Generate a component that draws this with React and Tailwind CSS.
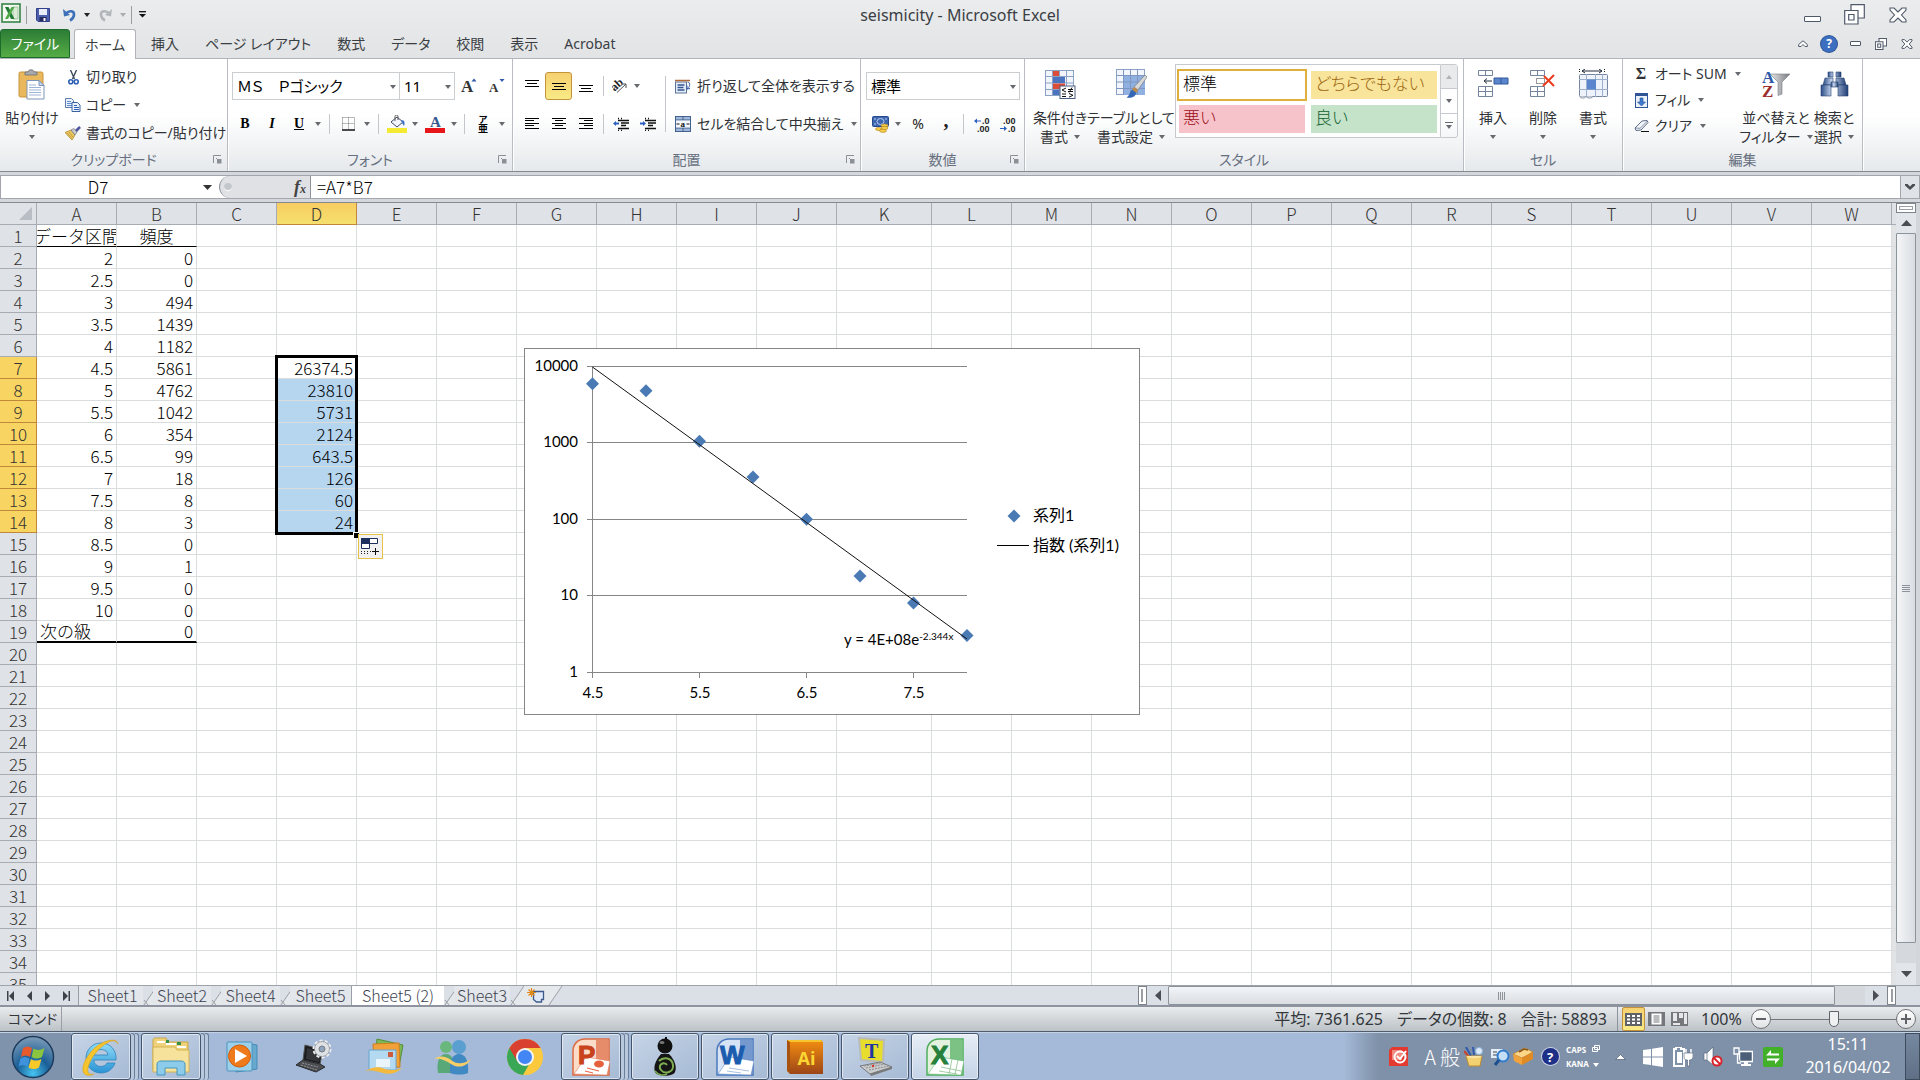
import React from "react";

const UI = "font-['Noto_Sans','Noto_Sans_CJK_JP',sans-serif]";
const SHEET = "font-['Noto_Sans_CJK_JP',sans-serif] font-light";

/* ---------- small shared pieces ---------- */

function Arrow({ className = "text-[#666a6e]" }) {
  return (
    <svg className={className} width="6" height="4" viewBox="0 0 6 4">
      <path d="M0 0h6L3 4z" fill="currentColor" />
    </svg>
  );
}

function Tool({ label, w, className = "", children }) {
  return (
    <button type="button" aria-label={label} className={`flex h-7 shrink-0 items-center justify-center ${w} ${className}`}>
      {children}
    </button>
  );
}

function Sep({ w, h = "h-5" }) {
  return (
    <span className={`flex shrink-0 items-center justify-center ${w}`}>
      <span className={`w-px bg-[#c3c7cb] ${h}`} />
    </span>
  );
}

function Group({ title, w, launcher, children }) {
  return (
    <section className={`flex shrink-0 flex-col border-r border-[#b9bdc3] shadow-[1px_0_0_#fff] ${w}`}>
      <div className="flex h-[90px]">{children}</div>
      <div className="relative flex h-[22px] items-center justify-center text-sm text-[#67707f]">
        {title}
        {launcher && (
          <button type="button" aria-label={`${title}の設定`} className="absolute right-[5px] top-[6px]">
            <svg width="9" height="9" viewBox="0 0 9 9">
              <path d="M.5 8V.5H8" fill="none" stroke="#8b9097" />
              <path d="M4 4h4.500v4.500H4z" fill="#8b9097" />
              <path d="M3 3l3 3" stroke="#8b9097" />
            </svg>
          </button>
        )}
      </div>
    </section>
  );
}

function BigButton({ icon, lines, w, arrowInline }) {
  return (
    <button type="button" className={`flex shrink-0 flex-col items-center pt-[9px] text-sm text-[#2f3236] ${w}`}>
      <span className="flex h-8 items-center justify-center">{icon}</span>
      <span className="mt-2 whitespace-nowrap leading-[19px]">{lines[0]}</span>
      <span className="flex h-[19px] items-center gap-1.5 whitespace-nowrap leading-[19px]">
        {arrowInline ? lines[1] : null}
        <Arrow />
      </span>
    </button>
  );
}

function SmallRow({ icon, label, arrow, h = "h-7", iconW = "w-5" }) {
  return (
    <button type="button" className={`flex items-center whitespace-nowrap text-sm text-[#2f3236] ${h}`}>
      <span className={`flex shrink-0 justify-center ${iconW}`}>{icon}</span>
      <span className="ml-1">{label}</span>
      {arrow && <Arrow className="ml-2 text-[#666a6e]" />}
    </button>
  );
}

function Picker({ label, value, w }) {
  return (
    <label className={`relative flex h-7 shrink-0 ${w}`}>
      <select
        aria-label={label}
        defaultValue={value}
        className="h-full w-full appearance-none border border-[#cbced1] bg-white pl-1 text-[15px] text-black"
      >
        <option>{value}</option>
      </select>
      <Arrow className="pointer-events-none absolute right-[4px] top-[13px] text-[#666a6e]" />
    </label>
  );
}

/* ---------- ribbon icons ---------- */

function ExcelMark() {
  return (
    <svg width="20" height="20" viewBox="0 0 20 20">
      <rect x="1" y="1" width="18" height="18" fill="#f3f8f1" stroke="#2b7d3c" strokeWidth="1.500" />
      <path d="M12 4h5v12h-5z" fill="#dcebd8" stroke="#79b07e" strokeWidth=".6" />
      <path d="M4 4h3.500l6 12H10z" fill="#1e7a35" />
      <path d="M13.500 4H10.500L4 16h3z" fill="#4fa847" />
    </svg>
  );
}
function Save() {
  return (
    <svg width="14" height="14" viewBox="0 0 14 14">
      <path d="M.5.5h13v13H2l-1.500-1.500z" fill="#4c5fae" stroke="#333f86" />
      <path d="M3 1h8v6H3z" fill="#e9edf8" />
      <path d="M3.500 9h7v4h-7z" fill="#23295c" />
      <path d="M7.500 10h2v3h-2z" fill="#fff" />
    </svg>
  );
}
function Undo({ color, flip }) {
  return (
    <svg width="13" height="14" viewBox="0 0 13 14" className={flip ? "-scale-x-100" : ""}>
      <path d="M3 5.500C6 2 11.500 2.500 11 7c-.3 2.500-2 4.500-4 5.500" fill="none" stroke={color} strokeWidth="2.600" />
      <path d="M0 1l1 7.500 6-1.500z" fill={color} />
    </svg>
  );
}
function Paste() {
  return (
    <svg width="28" height="31" viewBox="0 0 28 31">
      <rect x="1" y="3" width="24" height="25" rx="1.500" fill="#e9b85c" stroke="#c8943c" />
      <path d="M7 6V3h3c0-3 6-3 6 0h3v3z" fill="#a7a9ac" stroke="#6d7074" strokeWidth=".8" />
      <path d="M9 11.500h12l5 5V30H9z" fill="#fff" stroke="#7d95b8" />
      <path d="M21 11.500v5h5z" fill="#c9d8ee" stroke="#7d95b8" />
      <path d="M11 16h7M11 18.500h12M11 21h12M11 23.500h12M11 26h12" stroke="#9db4d6" />
    </svg>
  );
}
function Cut() {
  return (
    <svg width="11" height="15" viewBox="0 0 11 15">
      <path d="M2.500 0l4 9M8.500 0l-4 9" stroke="#3d4a5c" strokeWidth="1.400" />
      <circle cx="2.800" cy="11.800" r="2" fill="none" stroke="#2b5fb4" strokeWidth="1.600" />
      <circle cx="8.200" cy="11.800" r="2" fill="none" stroke="#2b5fb4" strokeWidth="1.600" />
    </svg>
  );
}
function Copy() {
  return (
    <svg width="16" height="14" viewBox="0 0 16 14">
      <path d="M.5.5h6l2 2V9.500h-8z" fill="#eaf1fb" stroke="#5d7cab" />
      <path d="M2 3.500h4M2 5.500h5M2 7.500h5" stroke="#5b8bd0" />
      <path d="M7 4.500h5.500l2.500 2.500v6.500H7z" fill="#eaf1fb" stroke="#3b62a0" />
      <path d="M9 7.500h3M9 9.500h5M9 11.500h5" stroke="#2e62b8" />
    </svg>
  );
}
function Brush() {
  return (
    <svg width="16" height="14" viewBox="0 0 16 14">
      <path d="M0 6.500L6 4l4 5-3 5z" fill="#e9c862" stroke="#b48a2c" strokeWidth=".8" />
      <path d="M2 7l5 5M4 6l4 5" stroke="#b48a2c" strokeWidth=".6" />
      <path d="M6 4l3-1.500L12 6l-2 3z" fill="#c8ccd2" stroke="#6e7378" strokeWidth=".7" />
      <path d="M10.500 4L14 .5l1.500 1.300L12 5.500z" fill="#4a53a3" stroke="#3b3f86" strokeWidth=".7" />
    </svg>
  );
}
function Lines({ rows, w = 14 }) {
  return (
    <svg width={w} height="12" viewBox="0 0 14 12">
      {rows.map(([x, y, l], i) => (
        <path key={i} d={`M${x} ${y + 0.5}h${l}`} stroke="#000" />
      ))}
    </svg>
  );
}
function GrowA({ size, up }) {
  return (
    <svg width="16" height="16" viewBox="0 0 16 16">
      <text x="0" y="14" fontFamily="Liberation Serif" fontWeight="bold" fontSize={size} fill="#333">A</text>
      <path d={up ? "M10.500 3.500h5l-2.500-3z" : "M10.500 1h5l-2.500 3z"} fill="#2c58a8" />
    </svg>
  );
}
function Borders() {
  return (
    <svg width="13" height="14" viewBox="0 0 13 14">
      <path d="M.5.5h12M.5 6.500h12M.5.5v12M6.500.5v12M12.500.5v12" stroke="#777" strokeDasharray="1 1" fill="none" />
      <path d="M0 13h13" stroke="#111" strokeWidth="1.500" />
    </svg>
  );
}
function Fill() {
  return (
    <svg width="20" height="18" viewBox="0 0 20 18">
      <path d="M4 7l6-5 6 5-6 5z" fill="#f2f6fc" stroke="#3c4c66" />
      <path d="M8 6V1.500c0-2 3-2 3 0V5" fill="none" stroke="#555" />
      <path d="M14 5c4 0 4 3 3 6l-2-3z" fill="#3e72c4" />
      <rect y="13" width="20" height="5" fill="#f4ea33" />
    </svg>
  );
}
function FontColor() {
  return (
    <svg width="20" height="18" viewBox="0 0 20 18">
      <text x="5" y="12" fontFamily="Liberation Serif" fontWeight="bold" fontSize="15" fill="#33588f">A</text>
      <rect y="13" width="20" height="5" fill="#e8151b" />
    </svg>
  );
}
function Phonetic() {
  return (
    <span className="flex flex-col items-center text-[9px] font-bold leading-[9px] text-black">
      <span>ア</span>
      <span className="text-[10px]">亜</span>
    </span>
  );
}
function Orient() {
  return (
    <svg width="16" height="14" viewBox="0 0 16 14">
      <text x="0" y="10" transform="rotate(-42 5 8)" fontFamily="Liberation Serif" fontWeight="bold" fontSize="12" fill="#222">ab</text>
      <path d="M5 13.500L14 5M14 9V5h-4" fill="none" stroke="#555" />
    </svg>
  );
}
function Indent({ right }) {
  return (
    <svg width="16" height="14" viewBox="0 0 16 14">
      <path d="M5 1.500h1M8 1.500h1M5 3.500h11M8 6h8M8 8.500h5M5 11.500h11M5 13.500h1M8 13.500h1" stroke="#111" strokeWidth="1.500" />
      <path d={right ? "M6 6.500L3 4v1.500H0v2h3V9z" : "M0 6.500L3 4v1.500h3v2H3V9z"} fill="#2c5fc0" />
    </svg>
  );
}
function Wrap() {
  return (
    <svg width="16" height="16" viewBox="0 0 16 16">
      <rect x=".5" y="4" width="11" height="11" fill="#e5edf8" stroke="#5b7297" />
      <path d="M0 2.500h15" stroke="#b26a3a" strokeWidth="1.500" />
      <path d="M2.500 7h7M2.500 9.500h6M2.500 12h7" stroke="#33558f" strokeWidth="1.300" />
      <path d="M12.500 4c3 0 3 5-.5 7M12 7.500V11l3-.5" fill="none" stroke="#2c58a8" />
    </svg>
  );
}
function Merge() {
  return (
    <svg width="16" height="16" viewBox="0 0 16 16">
      <rect x=".5" y=".5" width="15" height="15" fill="#9fb8da" stroke="#44628f" />
      <path d="M1 4h14M1 12h14M8 0v4M8 12v4" stroke="#44628f" />
      <rect x="1" y="4.500" width="14" height="7" fill="#f4f8fd" />
      <text x="5.500" y="11" fontFamily="Liberation Serif" fontWeight="bold" fontSize="9" fill="#111">a</text>
      <path d="M1.500 8h3M11.500 8h3" stroke="#111" />
    </svg>
  );
}
function Currency() {
  return (
    <svg width="17" height="17" viewBox="0 0 17 17">
      <rect x=".5" y=".5" width="16" height="10" rx="1" fill="#3e67b1" stroke="#274a8c" />
      <ellipse cx="8.500" cy="5.500" rx="3.500" ry="3" fill="none" stroke="#b7cdf0" />
      <path d="M2 3h2M13 3h2M2 8h2" stroke="#b7cdf0" />
      <ellipse cx="12.500" cy="9.500" rx="3.500" ry="1.600" fill="#f5cf4c" stroke="#b07e17" strokeWidth=".6" />
      <ellipse cx="12.500" cy="12" rx="3.500" ry="1.600" fill="#f5cf4c" stroke="#b07e17" strokeWidth=".6" />
      <ellipse cx="6.500" cy="13" rx="3" ry="1.500" fill="#f5cf4c" stroke="#b07e17" strokeWidth=".6" />
      <ellipse cx="11" cy="14.800" rx="3.500" ry="1.600" fill="#f5cf4c" stroke="#b07e17" strokeWidth=".6" />
    </svg>
  );
}
function Decimals({ inc }) {
  return (
    <svg width="16" height="15" viewBox="0 0 16 15">
      <text x={inc ? 8 : 3} y="7" fontFamily="Liberation Sans" fontWeight="bold" fontSize="9" fill="#222">{inc ? ".0" : ".00"}</text>
      <text x={inc ? 3 : 8} y="14.500" fontFamily="Liberation Sans" fontWeight="bold" fontSize="9" fill="#222">{inc ? ".00" : ".0"}</text>
      <path d={inc ? "M0 4l3-2.500v2h4v1H3v2z" : "M7 11.500L4 9v2H0v1h4v2z"} fill="#2c5fc0" />
    </svg>
  );
}
function CondFormat() {
  return (
    <svg width="31" height="29" viewBox="0 0 31 29">
      <rect x=".5" y=".5" width="28" height="25" fill="#f2f6fc" stroke="#8ba2c5" />
      <path d="M7.500 0v26M14.500 0v26M21.500 0v26M0 6.500h29M0 13h29M0 19.500h29" stroke="#8ba2c5" />
      <path d="M8 1h6v5H8zM8 13.500h12v5.500H8z" fill="#dd4c38" />
      <path d="M8 7h12v6H8zM8 20h6v5H8z" fill="#4a74c0" />
      <rect x="15" y="16" width="15" height="12.500" fill="#fff" stroke="#4a5f80" />
      <path d="M21 18l-4 2 4 2M17 24h4M17 26.500h4M23 19.500h5M23 21.500h5M27 17.500l-3 5M24 23.500l4 1.800-4 1.800" fill="none" stroke="#111" />
    </svg>
  );
}
function TableFormat() {
  return (
    <svg width="31" height="30" viewBox="0 0 31 30">
      <rect x=".5" y=".5" width="28" height="25" fill="#f2f6fc" stroke="#8ba2c5" />
      <path d="M8 7h21v19H8z" fill="#8fb0e0" />
      <path d="M7.500 0v26M14.500 0v26M21.500 0v26M0 6.500h29M0 13h29M0 19.500h29" stroke="#7d97c0" />
      <path d="M29 6l2 2-9 13-4-3z" fill="#d6d8da" stroke="#777b80" strokeWidth=".7" />
      <path d="M18 18l4 3-2 3-4-3z" fill="#c08a45" />
      <path d="M16 20.500l4.500 3.500c-2 5-6 5-10 4.500 3-1.500 3-5 5.500-8z" fill="#3566b6" />
    </svg>
  );
}
function CellsInsert() {
  return (
    <svg width="31" height="29" viewBox="0 0 31 29">
      <g fill="#fff" stroke="#75859d">
        <path d="M.5.5h14v5H.5zM.5 16.500h14v10H.5zM7.500.5v5M7.500 16.500v10M.5 21.500h14" />
      </g>
      <path d="M16 8h14v6H16z" fill="#5b85cc" stroke="#34599a" />
      <path d="M23 8v6" stroke="#34599a" />
      <path d="M7 11h7M6 11l3-2.500M6 11l3 2.500" stroke="#222c3c" />
    </svg>
  );
}
function CellsDelete() {
  return (
    <svg width="26" height="29" viewBox="0 0 26 29">
      <g fill="#fff" stroke="#75859d">
        <path d="M.5.500h14v5H.5zM.5 16.500h14v10H.5zM7.500.500v5M7.500 16.500v10M.5 21.500h14" />
      </g>
      <path d="M6.500 8.500h8v5h-8z" fill="none" stroke="#333" strokeDasharray="1 1" />
      <path d="M14 6l10 10M24 5L13 16" stroke="#ea3b1c" strokeWidth="2" />
    </svg>
  );
}
function CellsFormat() {
  return (
    <svg width="31" height="30" viewBox="0 0 31 30">
      <path d="M1.500 0v4M26.500 0v4" stroke="#222" strokeDasharray="1 1" />
      <path d="M4 2h20M7 0L4 2l3 2M21 0l3 2-3 2" stroke="#222c3c" fill="none" />
      <rect x="1.500" y="5.500" width="28" height="22" rx="1" fill="#eef3fb" stroke="#75859d" />
      <path d="M8.500 5v23M17.500 5v23M24.500 5v23M1 10.500h29M1 20.500h29" stroke="#9cafcc" />
      <path d="M9 10.500h9v10H9z" fill="#5b85cc" />
      <path d="M2 27.500c0 2 5 2 6 0 1 2 6 2 7 0" fill="#fff" stroke="#75859d" />
    </svg>
  );
}
function FillDown() {
  return (
    <svg width="13" height="15" viewBox="0 0 13 15">
      <rect x=".5" y=".5" width="12" height="14" fill="#eaf1fb" stroke="#2f5597" />
      <path d="M1 1h11v2H1z" fill="#2f5597" />
      <path d="M5 5h3v4h2.500l-4 4-4-4H5z" fill="#3f78d0" stroke="#24508f" strokeWidth=".6" />
    </svg>
  );
}
function Eraser() {
  return (
    <svg width="15" height="12" viewBox="0 0 15 12">
      <path d="M1 8l7-7 5-.5 1 2-7 7.500-5 .5z" fill="#f1f4f8" stroke="#5b6b85" />
      <path d="M1 8l5 .3L13.500 1" fill="none" stroke="#5b6b85" strokeWidth=".7" />
      <path d="M7 11.500h8" stroke="#111" />
    </svg>
  );
}
function SortFilter() {
  return (
    <svg width="30" height="30" viewBox="0 0 30 30">
      <defs>
        <linearGradient id="funnel" x1="0" x2="1">
          <stop offset="0" stopColor="#e8e9ea" />
          <stop offset="1" stopColor="#777b80" />
        </linearGradient>
      </defs>
      <path d="M9 5h20l-8 8v12l-4 1.500V13z" fill="url(#funnel)" stroke="#7a7e83" strokeWidth=".6" />
      <text x="1" y="14" fontFamily="Liberation Serif" fontWeight="bold" fontSize="17" fill="#2c5aa8">A</text>
      <text x="1" y="28" fontFamily="Liberation Serif" fontWeight="bold" fontSize="17" fill="#9b2d2d">Z</text>
    </svg>
  );
}
function Binoculars() {
  return (
    <svg width="29" height="27" viewBox="0 0 29 27">
      <defs>
        <linearGradient id="bino" x1="0" x2="1">
          <stop offset="0" stopColor="#2b4c87" />
          <stop offset=".4" stopColor="#cbdaf1" />
          <stop offset="1" stopColor="#1f3d74" />
        </linearGradient>
      </defs>
      <g fill="url(#bino)" stroke="#24406f" strokeWidth=".6">
        <path d="M8 1h5v5H8zM16 1h5v5h-5z" />
        <path d="M5 7h8v7H3zM16 7h8l2 7H16z" />
        <path d="M1 14h10v11H1zM18 14h10v11H18z" />
        <path d="M11 11h7v5h-7z" />
      </g>
    </svg>
  );
}

/* ---------- window chrome glyphs ---------- */

function WinRestore({ s }) {
  return (
    <svg width={s} height={s} viewBox="0 0 21 21" fill="#fff" stroke="#4f5a69" strokeWidth={s > 15 ? 1.2 : 1.8}>
      <path d="M7 .7h13.300V14H7z" />
      <path d="M.7 6.500H14v13.500H.7z" />
      <path d="M4.700 10.500H10V16H4.700z" />
    </svg>
  );
}
function WinClose({ s }) {
  return (
    <svg width={s} height={s - 2} viewBox="0 0 18 16" fill="#fff" stroke="#4f5a69" strokeWidth={s > 15 ? 1.1 : 1.6}>
      <path d="M1 1h4l4 4 4-4h4v2l-4.500 5 4.500 5v2h-4l-4-4-4 4H1v-2l4.500-5L1 3z" />
    </svg>
  );
}
function WinMin({ w }) {
  return <span className={`rounded-[1px] border border-[#4f5a69] bg-white ${w}`} />;
}

/* ---------- sheet data ---------- */

const COLS = "ABCDEFGHIJKLMNOPQRSTUVW".split("");
const AB = [
  ["データ区間", "頻度"],
  ["2", "0"],
  ["2.5", "0"],
  ["3", "494"],
  ["3.5", "1439"],
  ["4", "1182"],
  ["4.5", "5861"],
  ["5", "4762"],
  ["5.5", "1042"],
  ["6", "354"],
  ["6.5", "99"],
  ["7", "18"],
  ["7.5", "8"],
  ["8", "3"],
  ["8.5", "0"],
  ["9", "1"],
  ["9.5", "0"],
  ["10", "0"],
  ["次の級", "0"],
];
const D = { 7: "26374.5", 8: "23810", 9: "5731", 10: "2124", 11: "643.5", 12: "126", 13: "60", 14: "24" };

function cellValue(col, row) {
  if (col === "A" && row === 1) return <div className="flex h-[21px] justify-center overflow-hidden">{AB[0][0]}</div>;
  if (col === "A") return AB[row - 1]?.[0] ?? "";
  if (col === "B") return AB[row - 1]?.[1] ?? "";
  if (col === "D") return D[row] ?? "";
  return "";
}

function cellClass(col, row) {
  const inAB = col === "A" || col === "B";
  let align = "text-right pr-[3px]";
  if (row === 1) align = "text-center";
  if (row === 19 && col === "A") align = "text-left pl-[3px]";
  let border = "border-b border-b-[#d9dddd] leading-[21px]";
  if (inAB && row === 1) border = "border-b border-b-black leading-[21px]";
  if (inAB && row === 19) border = "border-b-2 border-b-black leading-5";
  const fill = col === "D" && row >= 8 && row <= 14 ? "bg-[#b6d5ef]" : "bg-white";
  return `h-[22px] whitespace-nowrap border-r border-r-[#d9dddd] p-0 ${align} ${border} ${fill}`;
}

function Sheet() {
  const rows = Array.from({ length: 35 }, (_, i) => i + 1);
  return (
    <table className={`w-[1932px] table-fixed border-separate border-spacing-0 text-[17px] text-black ${SHEET}`}>
      <colgroup>
        <col className="w-[37px]" />
        {COLS.map((c) => (
          <col key={c} className={c === "K" ? "w-[95px]" : "w-[80px]"} />
        ))}
        <col className="w-[40px]" />
      </colgroup>
      <thead>
        <tr>
          <th className="h-[22px] border-b border-r border-[#a7acb3] bg-[#dfe2e6] p-0">
            <svg className="ml-auto mr-1" width="13" height="13" viewBox="0 0 13 13">
              <path d="M13 0v13H0z" fill="#b9bdc4" />
            </svg>
          </th>
          {COLS.map((c) => (
            <th
              key={c}
              className={
                c === "D"
                  ? "h-[22px] border-b border-r border-[#c0883a] bg-linear-to-b from-[#f8cc62] to-[#f5e06e] p-0 font-light leading-[21px] text-[#333]"
                  : "h-[22px] border-b border-r border-[#a7acb3] bg-[#dfe2e6] p-0 font-light leading-[21px] text-[#333]"
              }
            >
              {c}
            </th>
          ))}
          <th className="border-b border-[#a7acb3] bg-[#dfe2e6] p-0" />
        </tr>
      </thead>
      <tbody>
        {rows.map((r) => (
          <tr key={r}>
            <th
              className={
                r >= 7 && r <= 14
                  ? "h-[22px] border-b border-r border-[#c0883a] bg-[#f8d562] p-0 font-light leading-[21px] text-[#333]"
                  : "h-[22px] border-b border-r border-[#a7acb3] bg-[#dfe2e6] p-0 font-light leading-[21px] text-[#333]"
              }
            >
              {r}
            </th>
            {COLS.map((c) => (
              <td key={c} className={cellClass(c, r)}>
                {cellValue(c, r)}
              </td>
            ))}
            <td className="border-b border-[#d9dddd] p-0" />
          </tr>
        ))}
      </tbody>
    </table>
  );
}

/* ---------- chart ---------- */

const POINTS = [
  [4.5, 5861],
  [5, 4762],
  [5.5, 1042],
  [6, 354],
  [6.5, 99],
  [7, 18],
  [7.5, 8],
  [8, 3],
];
const px = (x) => 68.5 + (x - 4.5) * 107;
const py = (v) => 324 - Math.log10(v) * 76.5;

function Diamond({ x, y }) {
  return <path d={`M${x - 6.5} ${y}l6.500-6.500 6.500 6.500-6.500 6.500z`} fill="#4a7ab4" />;
}

function Chart() {
  return (
    <svg width="616" height="367" viewBox="0 0 616 367" fontFamily="Lato, 'Noto Sans CJK JP', sans-serif" fontSize="15" fill="#000">
      <rect x=".5" y=".5" width="615" height="366" fill="#fff" stroke="#868686" />
      {[10000, 1000, 100, 10, 1].map((v) => (
        <g key={v}>
          <path d={`M63 ${Math.floor(py(v)) + 0.5}H443`} stroke="#868686" />
          <text x="54" y={Math.floor(py(v)) + 5} textAnchor="end">{v}</text>
        </g>
      ))}
      <path d="M68.500 18v307" stroke="#868686" />
      {[4.5, 5.5, 6.5, 7.5].map((v) => (
        <g key={v}>
          <path d={`M${px(v)} 324v6`} stroke="#868686" />
          <text x={px(v) + 0.5} y="350" textAnchor="middle">{v}</text>
        </g>
      ))}
      {POINTS.map(([x, v]) => (
        <Diamond key={x} x={px(x)} y={py(v)} />
      ))}
      <path d="M68.500 19L443 291" stroke="#111" />
      <text x="320" y="297" fontSize="15">
        y = 4E+08e<tspan dy="-5" fontSize="10">-2.344x</tspan>
      </text>
      <Diamond x={490} y={168} />
      <path d="M473 197.500h32" stroke="#000" />
      <text x="509" y="173" fontSize="16">系列1</text>
      <text x="509" y="203" fontSize="16">指数 (系列1)</text>
    </svg>
  );
}

/* ---------- taskbar icons ---------- */

function Orb() {
  return (
    <svg width="44" height="44" viewBox="0 0 44 44">
      <defs>
        <radialGradient id="orb" cx=".5" cy=".9" r=".9">
          <stop offset="0" stopColor="#45c4f0" />
          <stop offset=".45" stopColor="#1b5f97" />
          <stop offset="1" stopColor="#7f9db8" />
        </radialGradient>
      </defs>
      <circle cx="22" cy="22" r="20.500" fill="url(#orb)" stroke="#1c3a5c" strokeWidth="1.500" />
      <path d="M12 13c3-2 6-2 9 0l-2 9c-3-2-6-2-9 0z" fill="#e8592b" />
      <path d="M22.500 13.500c3 2 7 2 11-.5l-2.500 9c-4 2-7 2-10.500 0z" fill="#8bc43f" />
      <path d="M9.500 23.500c3-2 6-2 9 0l-2 8c-3-2-6-2-9 0z" fill="#3f93dc" />
      <path d="M20 24c3 2 7 2 10.500 0l-2.500 8.500c-4 2-7 2-10.500 0z" fill="#f8c928" />
    </svg>
  );
}
function IE() {
  return (
    <svg width="40" height="40" viewBox="0 0 40 40">
      <defs>
        <linearGradient id="ie" x2="0" y2="1">
          <stop offset="0" stopColor="#8fdcf8" />
          <stop offset="1" stopColor="#2a93d4" />
        </linearGradient>
      </defs>
      <path
        d="M20 6C11 6 5 13 5 21s6 15 15 15c7 0 12-4 14-10h-8c-1 2-3 3.500-6 3.500-4 0-7-2.500-7-6.500h22C36 13 29 6 20 6zm-7 12c.5-3.500 3-5.500 7-5.500s6.500 2 7 5.500z"
        fill="url(#ie)" stroke="#2f83bd" strokeWidth=".8"
      />
      <path d="M37 7C36-1 18 4 9 16 2 25-1 35 5 38c3 1 6 0 8-1-5 1-7-1-6-6C9 22 17 11 26 6c5-3 9-3 11 1z" fill="#f6c42c" stroke="#d39b14" strokeWidth=".5" />
    </svg>
  );
}
function Explorer() {
  return (
    <svg width="40" height="40" viewBox="0 0 40 40">
      <path d="M2 3c0-1 1-2 2-2h11l2 4h20v28H2z" fill="#efd27a" stroke="#c9a542" />
      <path d="M6 4h8v2H6zM15 6h10v2H15zM26 9h9v2h-9z" fill="#fff" />
      <path d="M15 3h3v3h-3zM26 5h4v3h-4z" fill="#3b8e45" />
      <path d="M2 10h22l2 3h12v22H2z" fill="#f6e29a" stroke="#d3b354" />
      <path d="M6 38V27c0-2 2-3 4-3h20c2 0 4 1 4 3v11h-8v-7H14v7z" fill="#8ccbe9" stroke="#4596bf" />
    </svg>
  );
}
function MediaPlayer() {
  return (
    <svg width="32" height="34" viewBox="0 0 32 34">
      <path d="M10 2l21 3v24l-21 3z" fill="#68a9cf" stroke="#4689b4" />
      <rect x="1" y="2" width="25" height="29" rx="1" fill="#9cd0ea" stroke="#4c93bd" />
      <circle cx="13.500" cy="16" r="11" fill="#ee7a1c" stroke="#cf5d0c" />
      <path d="M9 9l12 7-12 7z" fill="#fff" />
    </svg>
  );
}
function LaptopGear() {
  return (
    <svg width="38" height="36" viewBox="0 0 38 36">
      <path d="M10 6l18 5-3 14-17-4z" fill="#1c1c1e" stroke="#555" />
      <path d="M12 9l14 4-2 10-13-3z" fill="#333539" />
      <path d="M8 21l17 4 5 3-9 5-20-7z" fill="#4b4d50" stroke="#2a2b2d" />
      <path d="M7 24l16 4M6 26l16 5" stroke="#909396" strokeDasharray="2 1" />
      <circle cx="27" cy="10" r="8" fill="none" stroke="#eceeef" strokeWidth="3" strokeDasharray="3 2" />
      <circle cx="27" cy="10" r="7.500" fill="#dfe2e4" stroke="#8a8e92" strokeWidth=".7" />
      <circle cx="27" cy="10" r="3" fill="#8ea3bd" stroke="#7a7e83" />
    </svg>
  );
}
function Mail() {
  return (
    <svg width="40" height="38" viewBox="0 0 40 38">
      <path d="M12 1l26 6-4 22-24-6z" fill="#7cb956" stroke="#558f38" />
      <path d="M8 6l26-1 1 24-26 1z" fill="#f2a13a" stroke="#d07f1c" />
      <path d="M4 12h27v20H4z" fill="#b4daf2" stroke="#6ba4cc" />
      <path d="M11 21h14v8H11z" fill="#e9f4fb" />
      <path d="M23 14h5v5h-5z" fill="#cc5a3d" />
      <path d="M0 33c7-4 14-5 20-2 6 2 12 1 17-1-5 5-12 7-19 5s-12-3-18-2z" fill="#f5b93b" />
    </svg>
  );
}
function People() {
  return (
    <svg width="38" height="36" viewBox="0 0 38 36">
      <circle cx="12" cy="8" r="6" fill="#69b77c" />
      <path d="M4 34c-2-12 2-19 8-19s9 6 8 19z" fill="#59a878" />
      <circle cx="25" cy="8" r="7" fill="#5a9fd0" />
      <path d="M16 34c-1-13 3-19 9-19s10 6 9 19c-5 2-12 2-18 0z" fill="#4089c2" />
      <path d="M0 20c5-4 12-3 17 1s12 5 20-1c-5 9-14 9-20 5s-11-6-17-5z" fill="#f7cd6a" />
    </svg>
  );
}
function Chrome() {
  return (
    <svg width="38" height="38" viewBox="0 0 38 38">
      <circle cx="19" cy="19" r="18" fill="#fbc93d" />
      <path d="M19 19L3.400 10A18 18 0 0 0 17 37l8-14z" fill="#3aa757" />
      <path d="M3.400 10A18 18 0 0 1 34.600 10H19l-8 13z" fill="#d9402f" />
      <circle cx="19" cy="19" r="9" fill="#f4f4f4" />
      <circle cx="19" cy="19" r="7" fill="#4285f4" />
    </svg>
  );
}
function OfficeIcon({ letter, x, dark, mid, light, children }) {
  return (
    <svg width="38" height="38" viewBox="0 0 38 38">
      <path d="M1 37V13C1 6 6 1 13 1h24v36z" fill={light} stroke={mid} strokeWidth="1.500" />
      <path d="M24 2h12v34H24z" fill={mid} opacity=".7" />
      <path d="M14 19l24 4-3 14-33-1z" fill="#fff" stroke={mid} strokeWidth=".5" />
      {children}
      <text x={x} y="26" fontFamily="Liberation Sans" fontWeight="bold" fontSize="26" fill={dark} stroke={dark} strokeWidth="1">
        {letter}
      </text>
    </svg>
  );
}
function Kuro() {
  return (
    <svg width="24" height="40" viewBox="0 0 24 40">
      <path d="M13 0v4" stroke="#111" strokeWidth="2" />
      <circle cx="12" cy="9" r="7.500" fill="#111" />
      <ellipse cx="9" cy="5.500" rx="2.500" ry="1.500" fill="#777" />
      <path d="M8 17h8c6 6 8 13 6 18-2 5-18 5-20 0-2-6 1-12 6-18z" fill="#151515" />
      <path d="M6 24c5-5 13-3 14 4s-8 10-12 5 3-9 6-5" fill="none" stroke="#7fae52" strokeWidth="2" />
      <path d="M2 34c3 4 8 5 12 3" fill="none" stroke="#7fae52" strokeWidth="1.500" />
    </svg>
  );
}
function Illustrator() {
  return (
    <svg width="38" height="36" viewBox="0 0 38 36">
      <defs>
        <linearGradient id="ai" x2="0" y2="1">
          <stop offset="0" stopColor="#ee8a10" />
          <stop offset="1" stopColor="#9c4518" />
        </linearGradient>
      </defs>
      <path d="M1 1h34l2 2v32H4l-3-3z" fill="#a8520f" />
      <path d="M1 1h34l2 2H4z" fill="#f7c52d" />
      <path d="M4 3h33v32H4z" fill="url(#ai)" />
      <text x="20.500" y="26" textAnchor="middle" fontFamily="Open Sans" fontWeight="bold" fontSize="18" fill="#fcd733">Ai</text>
    </svg>
  );
}
function TeraTerm() {
  return (
    <svg width="36" height="40" viewBox="0 0 36 40">
      <path d="M2 1l25 2-1 22-22-2z" fill="#e7dd2c" stroke="#b9bbb8" strokeWidth="2" />
      <text x="8" y="21" fontFamily="Liberation Serif" fontWeight="bold" fontSize="20" fill="#2036a4">T</text>
      <path d="M3 29l20-4 12 5-22 7z" fill="#c9cbcc" stroke="#77797b" />
      <path d="M13 37l22-7v2l-21 7z" fill="#77797b" />
      <path d="M7 29l17-3M9 31l19-4M12 33l20-4" stroke="#8a8c8e" strokeDasharray="2 1" />
      <circle cx="16" cy="29" r="1.200" fill="#e0352c" />
    </svg>
  );
}

function TaskButton({ label, w, active, stacked, children }) {
  const bg = active
    ? "bg-linear-to-b from-[#e6edf5] to-[#c4d3e6]"
    : "bg-linear-to-br from-[#c6d4e6] to-[#a6bad5]";
  return (
    <span className="flex h-full shrink-0">
      <button
        type="button"
        aria-label={label}
        className={`flex h-full items-center justify-center rounded-[3px] border border-[#45566c] shadow-[inset_0_0_0_1px_rgba(255,255,255,.55)] ${w} ${bg}`}
      >
        {children}
      </button>
      {stacked && (
        <>
          <span className="h-full w-1 rounded-r-[3px] border-r border-t border-[#6c7f98] bg-[#b9c9dd]" />
          <span className="h-full w-1 rounded-r-[3px] border-r border-t border-[#6c7f98] bg-[#b9c9dd]" />
        </>
      )}
    </span>
  );
}

function Launch({ label, w, children }) {
  return (
    <button type="button" aria-label={label} className={`flex h-full shrink-0 items-center justify-center ${w}`}>
      {children}
    </button>
  );
}

/* ---------- regions ---------- */

function TitleBar() {
  return (
    <header className="grid h-[29px] shrink-0 grid-cols-[1fr_auto_1fr] text-[#3b3f44]">
      <div className="flex items-center">
        <button type="button" aria-label="Excel" className="mr-[5px] mt-[-3px] pl-px"><ExcelMark /></button>
        <span className="h-[18px] w-px bg-[#9a9ea3]" />
        <div className="flex h-[26px] items-center">
          <Tool label="上書き保存" w="w-8"><Save /></Tool>
          <Tool label="元に戻す" w="w-5"><Undo color="#3e6fb9" /></Tool>
          <Tool label="元に戻す一覧" w="w-4"><Arrow className="text-[#222]" /></Tool>
          <Tool label="やり直し" w="w-5"><Undo color="#b3b7bb" flip /></Tool>
          <Tool label="やり直し一覧" w="w-4"><Arrow className="text-[#aaaeb2]" /></Tool>
          <span className="h-[18px] w-px bg-[#9a9ea3]" />
          <Tool label="カスタマイズ" w="w-5">
            <svg width="7" height="7" viewBox="0 0 7 7"><path d="M0 .7h7" stroke="#111" strokeWidth="1.300" /><path d="M0 3h7L3.500 6.500z" fill="#111" /></svg>
          </Tool>
        </div>
      </div>
      <h1 className="flex items-center text-base">seismicity - Microsoft Excel</h1>
      <div className="flex items-center justify-end pr-4">
        <Tool label="最小化" w="w-10" className="pt-2"><WinMin w="h-1.5 w-[17px]" /></Tool>
        <Tool label="元のサイズに戻す" w="w-11"><WinRestore s={21} /></Tool>
        <Tool label="閉じる" w="w-11 -mr-4"><WinClose s={18} /></Tool>
      </div>
    </header>
  );
}

function RibbonTabs() {
  const tabs = ["挿入", "ページ レイアウト", "数式", "データ", "校閲", "表示", "Acrobat"];
  return (
    <nav className="flex h-[30px] shrink-0 items-stretch border-b border-[#b1b5ba] text-sm text-[#3b3f44]">
      <button type="button" className="w-[70px] rounded-t-[3px] border border-[#1d6b2b] bg-linear-to-b from-[#2c7d36] to-[#55ac45] text-sm text-white">
        ファイル
      </button>
      <button type="button" className="-mb-px ml-1 mr-0.5 w-[62px] rounded-t-[3px] border border-b-0 border-[#b1b5ba] bg-white">ホーム</button>
      {tabs.map((t) => (
        <button type="button" key={t} className="whitespace-nowrap px-[13px]">{t}</button>
      ))}
      <div className="ml-auto flex items-center">
        <Tool label="リボンの最小化" w="w-[26px]">
          <svg width="10" height="7" viewBox="0 0 10 7"><path d="M.7 4.500L5 .8l4.300 3.700v2H7L5 4.500l-2 2H.7z" fill="#fff" stroke="#4f5a69" /></svg>
        </Tool>
        <Tool label="ヘルプ" w="w-[26px]">
          <span className="flex size-4 items-center justify-center rounded-full bg-[#3d6fc0] text-[12px] font-bold leading-4 text-white ring-1 ring-[#2f5597]">?</span>
        </Tool>
        <Tool label="ブックの最小化" w="w-[26px]"><WinMin w="h-[5px] w-[11px]" /></Tool>
        <Tool label="ブックを元に戻す" w="w-[26px]"><WinRestore s={12} /></Tool>
        <Tool label="ブックを閉じる" w="w-[26px]"><WinClose s={12} /></Tool>
      </div>
    </nav>
  );
}

const L = {
  top: [[0, 0, 14], [2, 3, 10], [0, 6, 14]],
  mid: [[0, 3, 14], [2, 6, 10], [0, 9, 14]],
  bot: [[0, 5, 14], [2, 8, 10], [0, 11, 14]],
  left: [[0, 0, 14], [0, 2, 9], [0, 5, 14], [0, 7, 9], [0, 10, 14]],
  center: [[0, 0, 14], [3, 2, 8], [0, 5, 14], [3, 7, 8], [0, 10, 14]],
  right: [[0, 0, 14], [5, 2, 9], [0, 5, 14], [5, 7, 9], [0, 10, 14]],
};

function Ribbon() {
  return (
    <div className="flex h-[112px] shrink-0 overflow-hidden bg-linear-to-b from-white from-50% to-[#e6e9ec] [font-feature-settings:'palt']">
      <Group title="クリップボード" w="w-[228px]" launcher>
        <BigButton w="w-[64px]" icon={<Paste />} lines={["貼り付け"]} />
        <div className="flex flex-col items-start pt-1">
          <SmallRow icon={<Cut />} label="切り取り" iconW="w-[18px]" />
          <SmallRow icon={<Copy />} label="コピー" arrow iconW="w-[18px]" />
          <SmallRow icon={<Brush />} label="書式のコピー/貼り付け" iconW="w-[18px]" />
        </div>
      </Group>

      <Group title="フォント" w="w-[285px]" launcher>
        <div className="flex flex-col gap-2.5 pl-1 pt-[13px]">
          <div className="flex">
            <Picker label="フォント名" value="ＭＳ　Ｐゴシック" w="w-[168px]" />
            <Picker label="フォント サイズ" value="11" w="w-[56px] -ml-px" />
            <Tool label="拡大" w="w-7"><GrowA size="17" up /></Tool>
            <Tool label="縮小" w="w-7"><GrowA size="13" /></Tool>
          </div>
          <div className="flex">
            <Tool label="太字" w="w-[26px]" className="font-['Liberation_Serif',serif] text-sm font-bold">B</Tool>
            <Tool label="斜体" w="w-7" className="font-['Liberation_Serif',serif] text-sm font-bold italic">I</Tool>
            <Tool label="下線" w="w-[26px]" className="font-['Liberation_Serif',serif] text-sm font-bold underline">U</Tool>
            <Tool label="下線の種類" w="w-3"><Arrow /></Tool>
            <Sep w="w-2.5" />
            <Tool label="罫線" w="w-7"><Borders /></Tool>
            <Tool label="罫線の種類" w="w-2.5"><Arrow /></Tool>
            <Sep w="w-3" />
            <Tool label="塗りつぶし" w="w-[26px]"><Fill /></Tool>
            <Tool label="塗りつぶしの色" w="w-2.5"><Arrow /></Tool>
            <Tool label="フォントの色" w="w-[30px]"><FontColor /></Tool>
            <Tool label="色の一覧" w="w-2"><Arrow /></Tool>
            <Sep w="w-3" />
            <Tool label="ふりがな" w="w-[26px]"><Phonetic /></Tool>
            <Tool label="ふりがなの設定" w="w-3"><Arrow /></Tool>
          </div>
        </div>
      </Group>

      <Group title="配置" w="w-[348px]" launcher>
        <div className="flex flex-col gap-2.5 pl-[5px] pt-[13px]">
          <div className="flex">
            <Tool label="上揃え" w="w-[27px]"><Lines rows={L.top} /></Tool>
            <Tool label="上下中央揃え" w="w-[27px]" className="rounded-[3px] border border-[#c2933b] bg-linear-to-b from-[#f6d071] to-[#f8ea86]"><Lines rows={L.mid} /></Tool>
            <Tool label="下揃え" w="w-[27px]"><Lines rows={L.bot} /></Tool>
            <Sep w="w-2" />
            <Tool label="方向" w="w-[26px]"><Orient /></Tool>
            <Tool label="方向の一覧" w="w-2"><Arrow /></Tool>
          </div>
          <div className="flex">
            <Tool label="左揃え" w="w-[27px]"><Lines rows={L.left} /></Tool>
            <Tool label="中央揃え" w="w-[27px]"><Lines rows={L.center} /></Tool>
            <Tool label="右揃え" w="w-[27px]"><Lines rows={L.right} /></Tool>
            <Sep w="w-2" />
            <Tool label="インデントを減らす" w="w-7"><Indent /></Tool>
            <Tool label="インデントを増やす" w="w-[26px]"><Indent right /></Tool>
          </div>
        </div>
        <Sep w="w-2" h="h-14" />
        <div className="flex flex-col items-start gap-2.5 pl-1 pt-[13px]">
          <SmallRow icon={<Wrap />} label="折り返して全体を表示する" />
          <SmallRow icon={<Merge />} label="セルを結合して中央揃え" arrow />
        </div>
      </Group>

      <Group title="数値" w="w-[164px]" launcher>
        <div className="flex flex-col gap-2.5 pl-[5px] pt-[13px]">
          <Picker label="表示形式" value="標準" w="w-[154px]" />
          <div className="flex">
            <Tool label="通貨" w="w-7"><Currency /></Tool>
            <Tool label="通貨の一覧" w="w-2"><Arrow /></Tool>
            <Tool label="パーセント" w="w-8" className="text-sm text-[#222]">%</Tool>
            <Tool label="桁区切り" w="w-6" className="pb-2 font-['Liberation_Serif',serif] text-xl font-bold text-[#222]">,</Tool>
            <Sep w="w-2.5" />
            <Tool label="小数点以下を増やす" w="w-7"><Decimals inc /></Tool>
            <Tool label="小数点以下を減らす" w="w-6"><Decimals /></Tool>
          </div>
        </div>
      </Group>

      <Group title="スタイル" w="w-[439px]">
        <div className="flex pl-1">
          <BigButton w="w-[62px]" icon={<CondFormat />} lines={["条件付き", "書式"]} arrowInline />
          <BigButton w="w-[80px]" icon={<TableFormat />} lines={["テーブルとして", "書式設定"]} arrowInline />
        </div>
        <div className={`ml-1 mt-[5px] flex h-[74px] text-[17px] leading-6 ${SHEET}`}>
          <div className="grid w-[265px] grid-cols-2 gap-1.5 border border-r-0 border-[#c6cace] bg-white px-[3px] py-1.5">
            <button type="button" className="flex items-center bg-white pb-1 pl-1 text-black ring-2 ring-[#dfb13c]">標準</button>
            <button type="button" className="flex items-center whitespace-nowrap bg-[#f8e49a] pb-1 pl-1 text-[#9c6511]">どちらでもない</button>
            <button type="button" className="flex items-center bg-[#f7c3cb] pb-1 pl-1 text-[#9c0f16]">悪い</button>
            <button type="button" className="flex items-center bg-[#c5e3c8] pb-1 pl-1 text-[#106130]">良い</button>
          </div>
          <div className="flex w-[18px] flex-col rounded-r-[3px] border border-[#c6cace]">
            <button type="button" aria-label="前の行" className="flex flex-1 items-center justify-center border-b border-[#c6cace] bg-[#e9eaec]"><Arrow className="rotate-180 text-[#b0b4b8]" /></button>
            <button type="button" aria-label="次の行" className="flex flex-1 items-center justify-center border-b border-[#c6cace]"><Arrow /></button>
            <button type="button" aria-label="その他" className="flex flex-1 flex-col items-center justify-center gap-0.5"><span className="h-px w-2 bg-[#666a6e]" /><Arrow /></button>
          </div>
        </div>
      </Group>

      <Group title="セル" w="w-[159px]">
        <div className="flex pl-1">
          <BigButton w="w-[50px]" icon={<CellsInsert />} lines={["挿入"]} />
          <BigButton w="w-[50px]" icon={<CellsDelete />} lines={["削除"]} />
          <BigButton w="w-[50px]" icon={<CellsFormat />} lines={["書式"]} />
        </div>
      </Group>

      <Group title="編集" w="w-[240px]">
        <div className="flex w-[118px] shrink-0 flex-col items-start pl-2 pt-0.5">
          <SmallRow h="h-[26px]" icon={<span className="font-['Liberation_Serif',serif] text-base font-bold">Σ</span>} label="オート SUM" arrow />
          <SmallRow h="h-[26px]" icon={<FillDown />} label="フィル" arrow />
          <SmallRow h="h-[26px]" icon={<Eraser />} label="クリア" arrow />
        </div>
        <BigButton w="w-[70px]" icon={<SortFilter />} lines={["並べ替えと", "フィルター"]} arrowInline />
        <BigButton w="w-[46px]" icon={<Binoculars />} lines={["検索と", "選択"]} arrowInline />
      </Group>
    </div>
  );
}

function FormulaBar() {
  return (
    <div className="h-8 shrink-0 border-y border-[#858a91] bg-[#d4d8dd] pb-1 pt-[3px]">
      <div className={`flex h-6 items-stretch border-y border-[#a3a7ad] bg-white text-[17px] ${SHEET}`}>
        <input aria-label="名前ボックス" defaultValue="D7" className="w-[195px] border-l border-[#a3a7ad] bg-white text-center outline-none" />
        <button type="button" aria-label="名前の一覧" className="flex w-6 items-center justify-center">
          <svg width="9" height="5" viewBox="0 0 9 5"><path d="M0 0h9L4.500 5z" fill="#333" /></svg>
        </button>
        <div className="flex w-[92px] items-center justify-between rounded-l-full border border-y-0 border-[#8d9299] bg-[#dfe1e5] pl-1 pr-1">
          <span className="size-2 rounded-full bg-[#c3c7cc] shadow-[inset_0_-1px_0_#fff]" />
          <button type="button" aria-label="関数の挿入" className="font-['Liberation_Serif',serif] text-lg font-bold italic leading-5 text-[#444]">
            f<span className="text-xs">x</span>
          </button>
        </div>
        <input aria-label="数式バー" defaultValue="=A7*B7" className="min-w-0 flex-1 bg-white pl-1.5 outline-none" />
        <button type="button" aria-label="数式バーの展開" className="flex w-5 items-center justify-center border border-y-0 border-[#a3a7ad] bg-[#dfe2e6]">
          <svg width="10" height="6" viewBox="0 0 10 6"><path d="M0 0h2.500L5 2.500 7.500 0H10v1.500L5 6 0 1.500z" fill="#4a4d52" /></svg>
        </button>
      </div>
    </div>
  );
}

function VScroll() {
  return (
    <div className="flex w-6 shrink-0 flex-col items-center border-r-4 border-[#d3d6da] bg-[#e2e5e9]">
      <div className="h-[10px] w-full border border-[#7f858d] bg-white p-0.5"><div className="h-full border border-[#9a9fa6]" /></div>
      <button type="button" aria-label="上へ" className="flex h-5 w-full items-center justify-center">
        <svg width="11" height="6" viewBox="0 0 11 6"><path d="M5.500 0L11 6H0z" fill="#4a4d52" /></svg>
      </button>
      <div className="flex min-h-0 w-full flex-1 flex-col">
        <div className="flex flex-[710] flex-col items-center justify-center gap-px rounded-[1px] border border-[#8d939b] bg-linear-to-r from-[#f3f5f7] to-[#dadde2]">
          <span className="h-px w-2 bg-[#8d939b]" />
          <span className="h-px w-2 bg-[#8d939b]" />
          <span className="h-px w-2 bg-[#8d939b]" />
          <span className="h-px w-2 bg-[#8d939b]" />
        </div>
        <div className="flex-[20] bg-[#d5d9de]" />
      </div>
      <button type="button" aria-label="下へ" className="flex h-[22px] w-full items-center justify-center">
        <svg width="11" height="6" viewBox="0 0 11 6"><path d="M0 0h11L5.500 6z" fill="#4a4d52" /></svg>
      </button>
    </div>
  );
}

function Slash() {
  return (
    <svg className="h-full w-[18px] shrink-0" viewBox="0 0 18 19">
      <path d="M1 19L14 0h4v19z" fill="#e6e9ec" />
      <path d="M1 19L14 0M1 14l4 5" fill="none" stroke="#9a9fa6" />
    </svg>
  );
}

function NavGlyph({ d, label, w }) {
  return (
    <button type="button" aria-label={label} className={`flex items-center justify-center ${w}`}>
      <svg width="8" height="10" viewBox="0 0 8 10"><path d={d} fill="#3c4148" /></svg>
    </button>
  );
}

function SheetTabs() {
  return (
    <div className={`flex h-[22px] shrink-0 items-stretch border-b-2 border-t border-[#8e949f] border-t-[#9ea3aa] bg-[#dbe0e7] text-base leading-[19px] text-[#3b4250] ${SHEET}`}>
      <NavGlyph label="先頭シート" w="w-[21px]" d="M0 0h1.500v10H0zM7 0v10L2 5z" />
      <NavGlyph label="前のシート" w="w-[17px]" d="M6 0v10L1 5z" />
      <NavGlyph label="次のシート" w="w-[18px]" d="M2 0v10l5-5z" />
      <NavGlyph label="最終シート" w="w-[20px]" d="M6.500 0H8v10H6.500zM1 0v10l5-5z" />
      <span className="ml-0.5 w-px bg-[#9a9fa6]" />
      <button type="button" className="w-[64px] bg-[#e3e6ea] pl-[3px] text-center">Sheet1</button>
      <Slash />
      <button type="button" className="-ml-2 w-[58px] bg-[#e3e6ea] text-center">Sheet2</button>
      <Slash />
      <button type="button" className="-ml-2 w-[59px] bg-[#e3e6ea] text-center">Sheet4</button>
      <Slash />
      <button type="button" className="-ml-2 w-[62px] border-r border-[#9a9fa6] bg-[#e3e6ea] text-center">Sheet5</button>
      <button type="button" className="w-[92px] whitespace-nowrap bg-white text-center">Sheet5 (2)</button>
      <Slash />
      <button type="button" className="-ml-2 w-[56px] bg-[#e3e6ea] text-center">Sheet3</button>
      <Slash />
      <button type="button" aria-label="ワークシートの挿入" className="-ml-1 flex w-6 items-center justify-center bg-[#e6e9ec]">
        <svg width="18" height="16" viewBox="0 0 18 16">
          <path d="M6.500 3.500h10v8h-2v2.500h-5l-3-2.500z" fill="#dfe9f7" stroke="#3c5a8c" strokeWidth="1.300" />
          <path d="M4.500 0v9M0 4.500h9M1.500 1.500l6 6M7.500 1.500l-6 6" stroke="#e08a1c" strokeWidth="1.200" />
        </svg>
      </button>
      <svg className="h-full w-4 shrink-0" viewBox="0 0 16 19"><path d="M0 19V0h14L1 19z" fill="#e6e9ec" /><path d="M1 19L14 0" stroke="#9a9fa6" /></svg>
      <div className="min-w-0 flex-1" />
      <div className="flex w-[758px] shrink-0 items-stretch">
        <span className="w-[9px] border border-[#7f858d] bg-white p-0.5"><span className="block h-full w-0.5 bg-[#9a9fa6]" /></span>
        <button type="button" aria-label="左へ" className="flex w-[21px] items-center justify-center">
          <svg width="6" height="11" viewBox="0 0 6 11"><path d="M6 0v11L0 5.500z" fill="#4a4d52" /></svg>
        </button>
        <div className="flex w-[667px] items-center justify-center gap-px rounded-[1px] border border-[#8d939b] bg-linear-to-b from-[#f3f5f7] to-[#dadde2]">
          <span className="h-2 w-px bg-[#8d939b]" />
          <span className="h-2 w-px bg-[#8d939b]" />
          <span className="h-2 w-px bg-[#8d939b]" />
          <span className="h-2 w-px bg-[#8d939b]" />
        </div>
        <div className="w-[30px] bg-[#d5d9de]" />
        <button type="button" aria-label="右へ" className="flex w-[22px] items-center justify-center">
          <svg width="6" height="11" viewBox="0 0 6 11"><path d="M0 0v11l6-5.500z" fill="#4a4d52" /></svg>
        </button>
        <span className="w-[9px] border border-[#7f858d] bg-white p-0.5"><span className="ml-auto block h-full w-0.5 bg-[#9a9fa6]" /></span>
      </div>
      <div className="w-6 shrink-0" />
    </div>
  );
}

function StatusBar() {
  return (
    <footer className="flex h-[25px] shrink-0 items-center border-b border-[#4f5c6b] bg-linear-to-b from-[#e9ebed] to-[#bcc2c7] text-base leading-6 text-[#33373b] [font-feature-settings:'palt']">
      <span className="w-[61px] pl-2 text-sm">コマンド</span>
      <span className="h-full w-px bg-[#9a9fa6]" />
      <div className="ml-auto flex items-center gap-3.5 whitespace-nowrap">
        <span>平均: 7361.625</span>
        <span>データの個数: 8</span>
        <span>合計: 58893</span>
      </div>
      <span className="ml-2.5 h-6 w-px bg-[#8d939b]" />
      <button type="button" aria-label="標準" className="ml-1 flex h-6 w-[23px] items-center justify-center rounded-[2px] border border-[#c2933b] bg-linear-to-b from-[#f6d071] to-[#f8ea86]">
        <svg width="17" height="13" viewBox="0 0 17 13"><path d="M0 0h17v13H0z" fill="#5f6368" /><g fill="#fff"><path d="M2 2h3v2H2zM7 2h3v2H7zM12 2h3v2h-3zM2 5.500h3v2H2zM7 5.500h3v2H7zM12 5.500h3v2h-3zM2 9h3v2H2zM7 9h3v2H7zM12 9h3v2h-3z" /></g></svg>
      </button>
      <button type="button" aria-label="ページ レイアウト" className="flex w-[23px] justify-center">
        <svg width="17" height="14" viewBox="0 0 17 14"><path d="M0 0h17v14H0z" fill="#74787c" /><path d="M3.500 1.500h10v11h-10z" fill="#fff" /><path d="M5.500 4h6M5.500 6h6M5.500 8h6M5.500 10h6" stroke="#74787c" /></svg>
      </button>
      <button type="button" aria-label="改ページ プレビュー" className="flex w-[23px] justify-center">
        <svg width="17" height="14" viewBox="0 0 17 14"><path d="M0 0h17v14H0z" fill="#74787c" /><path d="M2 1h4v8H2zM8 1h4v5H8zM2 11h7v2H2zM13 1h3v11h-3z" fill="#e6e7e8" /></svg>
      </button>
      <span className="ml-2.5 w-[50px]">100%</span>
      <button type="button" aria-label="縮小" className="flex size-5 items-center justify-center rounded-full border border-[#6d7277] bg-linear-to-b from-white to-[#dfe1e3]"><span className="h-0.5 w-2.5 bg-[#5f6368]" /></button>
      <input
        type="range" aria-label="ズーム" min="0" max="200" defaultValue="100"
        className="h-4 w-[125px] appearance-none bg-[linear-gradient(#73787d,#73787d)] bg-[length:100%_1px] bg-center bg-no-repeat [&::-webkit-slider-thumb]:h-4 [&::-webkit-slider-thumb]:w-2.5 [&::-webkit-slider-thumb]:appearance-none [&::-webkit-slider-thumb]:rounded-b-[5px] [&::-webkit-slider-thumb]:border [&::-webkit-slider-thumb]:border-[#5f6368] [&::-webkit-slider-thumb]:bg-[#eef0f1]"
      />
      <button type="button" aria-label="拡大" className="mr-1 flex size-5 items-center justify-center rounded-full border border-[#6d7277] bg-linear-to-b from-white to-[#dfe1e3]">
        <svg width="10" height="10" viewBox="0 0 10 10"><path d="M0 5h10M5 0v10" stroke="#5f6368" strokeWidth="2" /></svg>
      </button>
    </footer>
  );
}

function Taskbar() {
  return (
    <div className="flex h-12 shrink-0 items-stretch border-t border-[#c3d2e4] bg-[#a4bad8]">
      <div className="flex w-[71px] shrink-0 items-center bg-[#7f93ac] pl-[11px]">
        <button type="button" aria-label="スタート"><Orb /></button>
      </div>
      <div className="flex items-stretch">
        <TaskButton label="Internet Explorer" w="w-[60px]" stacked><IE /></TaskButton>
        <span className="w-0.5" />
        <TaskButton label="エクスプローラー" w="w-[60px]" stacked><Explorer /></TaskButton>
        <Launch label="Media Player" w="w-[66px]"><MediaPlayer /></Launch>
        <Launch label="デバイス" w="w-[78px]"><LaptopGear /></Launch>
        <Launch label="メール" w="w-[64px]"><Mail /></Launch>
        <Launch label="メッセンジャー" w="w-[72px]"><People /></Launch>
        <Launch label="Chrome" w="w-[72px]"><Chrome /></Launch>
      </div>
      <div className="flex items-stretch gap-0.5">
        <TaskButton label="PowerPoint" w="w-[60px]" stacked>
          <OfficeIcon letter="P" x="6" dark="#c8431b" mid="#dd6a43" light="#fadcc8"><ellipse cx="27" cy="26" rx="5" ry="3.500" fill="#e5603c" /><path d="M15 30l12 3M13 33l8 2" stroke="#e5603c" /></OfficeIcon>
        </TaskButton>
        <TaskButton label="Kuro" w="w-[68px]"><Kuro /></TaskButton>
        <TaskButton label="Word" w="w-[68px]">
          <OfficeIcon letter="W" x="4" dark="#1a5cae" mid="#4b78bd" light="#d6e4f6"><path d="M13 30l20 3M11 33l14 2" stroke="#a9c0e2" /></OfficeIcon>
        </TaskButton>
        <TaskButton label="Illustrator" w="w-[68px]"><Illustrator /></TaskButton>
        <TaskButton label="Tera Term" w="w-[68px]"><TeraTerm /></TaskButton>
        <TaskButton label="Excel" w="w-[68px]" active>
          <OfficeIcon letter="X" x="5" dark="#25803b" mid="#4fae5c" light="#e3f2df"><path d="M15 29l20 4M13 33l18 3M26 21l-3 15M32 22l-3 14" stroke="#8cc08e" strokeWidth=".8" /></OfficeIcon>
        </TaskButton>
      </div>
      <div className="min-w-0 flex-1" />
      <div className="w-[34px] bg-linear-to-r from-[#a4bad8] to-[#7f91a8]" />
      <div className="flex shrink-0 items-center bg-[#7f91a8] text-white">
        <Launch label="Trend" w="w-[40px]">
          <svg width="19" height="19" viewBox="0 0 19 19"><path d="M0 3l3-3h16v19H0z" fill="#e23a30" /><path d="M3 3h10v10H3z" fill="#f28a80" /><circle cx="11" cy="10" r="5.500" fill="none" stroke="#fff" strokeWidth="2" /><path d="M8 9l3 3 6-8" fill="none" stroke="#fff" strokeWidth="2" /></svg>
        </Launch>
        <span className={`ml-1.5 flex gap-1 whitespace-nowrap text-[20px] ${SHEET} leading-6`}><span>A</span><span>般</span></span>
        <Launch label="IME パッド" w="w-7">
          <svg width="20" height="20" viewBox="0 0 20 20"><path d="M2 0l5 9M9 0l1 8" stroke="#2e5ab0" strokeWidth="2" /><path d="M0 4l5 6" stroke="#c9402b" strokeWidth="2" /><circle cx="15" cy="4" r="3.500" fill="#dceaf8" stroke="#8fb3d9" /><path d="M2 9h16l-2 10H5z" fill="#f3d071" stroke="#ba8e2e" /><path d="M2 9c4 3 12 3 16 0" fill="#fae6a8" /></svg>
        </Launch>
        <Launch label="検索" w="w-6">
          <svg width="19" height="18" viewBox="0 0 19 18"><path d="M0 1h12v9H0z" fill="#e6eef8" /><path d="M2 4h4M2 7h4" stroke="#445" /><circle cx="12" cy="8" r="5.500" fill="#c4def6" stroke="#2f7ccc" strokeWidth="2" /><path d="M8 12l-4 5" stroke="#1d4f90" strokeWidth="3" /></svg>
        </Launch>
        <Launch label="ツール" w="w-[22px]">
          <svg width="20" height="19" viewBox="0 0 20 19"><path d="M0 7l12-6 8 4-11 6z" fill="#fbd588" stroke="#c07a1c" strokeWidth=".7" /><path d="M0 7l9 4v7l-8-4z" fill="#f0a33c" /><path d="M9 11l11-6v7L9 18z" fill="#e08a24" /><path d="M6 5l5-3 4 1" fill="none" stroke="#8a5413" strokeWidth="1.500" /></svg>
        </Launch>
        <Launch label="ヘルプ" w="w-[32px]">
          <span className="flex size-[17px] items-center justify-center rounded-full bg-[#1d2f86] text-[13px] font-bold leading-4 ring-1 ring-[#cdd3e4]">?</span>
        </Launch>
        <div className="grid grid-cols-[26px_10px] gap-y-1 text-[8px] font-bold leading-[10px]">
          <span>CAPS</span>
          <svg width="8" height="7" viewBox="0 0 8 7"><path d="M2.500.5h5v4h-5zM.5 2.500h5v4h-5z" fill="#7f91a8" stroke="#fff" /></svg>
          <span>KANA</span>
          <Arrow className="ml-px mt-1 text-white" />
        </div>
        <Launch label="隠れているアイコン" w="w-9">
          <svg width="11" height="6" viewBox="0 0 11 6"><path d="M5.500.5l5 5H.5z" fill="#fff" stroke="#4f5d70" strokeWidth=".7" /></svg>
        </Launch>
        <Launch label="Windows" w="w-[30px]">
          <svg width="20" height="20" viewBox="0 0 20 20" fill="#fff"><path d="M0 3l8-1v7.500H0zM9 1.800L20 0v9.500H9zM0 10.500h8V18l-8-1zM9 10.500h11V20L9 18.300z" /></svg>
        </Launch>
        <Launch label="電源" w="w-[30px]">
          <svg width="20" height="20" viewBox="0 0 20 20"><path d="M3 2V0h5v2h3v17H1V2z" fill="#7f91a8" stroke="#fff" strokeWidth="2" /><path d="M4 5h5v11H4z" fill="#fff" /><path d="M13 2v4M18 2v4" stroke="#fff" strokeWidth="1.500" /><path d="M11 6h9v4c0 2-2 3-3.500 3v6h-2v-6C12 13 11 12 11 10z" fill="#fff" stroke="#4f5d70" strokeWidth=".6" /></svg>
        </Launch>
        <Launch label="音量" w="w-[30px]">
          <svg width="20" height="20" viewBox="0 0 20 20"><path d="M1 6h3l6-6v18l-6-5H1z" fill="#fff" stroke="#4f5d70" strokeWidth=".6" /><path d="M4 6v7" stroke="#8a96a8" /><circle cx="14" cy="14" r="4.500" fill="#fff" stroke="#d8232a" strokeWidth="2" /><path d="M11 11l6 6" stroke="#d8232a" strokeWidth="2" /></svg>
        </Launch>
        <Launch label="ネットワーク" w="w-[30px]">
          <svg width="20" height="20" viewBox="0 0 20 20"><path d="M6.500 4.500h13v10h-13z" fill="#4d5f78" stroke="#fff" strokeWidth="1.500" /><path d="M11 15h4v2h3v2H8v-2h3z" fill="#fff" /><path d="M1 1h5v6H1zM3 7h1.500v9H8" fill="#7f91a8" stroke="#fff" strokeWidth="1.300" /></svg>
        </Launch>
        <Launch label="同期" w="w-[30px]">
          <svg width="20" height="20" viewBox="0 0 20 20"><rect width="20" height="20" rx="2" fill="#43b02a" /><path d="M3 8.500h13v-2H8V3zM17 11.500H4v2h8V17z" fill="#fff" /></svg>
        </Launch>
        <time className="ml-1 mr-px flex h-full w-[112px] flex-col items-center text-base leading-[23px]">
          <span>15:11</span>
          <span>2016/04/02</span>
        </time>
        <button type="button" aria-label="デスクトップの表示" className="h-full w-[15px] border border-[#3f4c5d] bg-linear-to-b from-[#76889f] to-[#5f7086]" />
      </div>
    </div>
  );
}

export default function App() {
  return (
    <div className={`flex h-screen flex-col overflow-hidden bg-linear-to-b from-[#eaecee] to-[#e1e3e5] to-[60px] ${UI}`}>
      <TitleBar />
      <div className="[font-feature-settings:'palt']"><RibbonTabs /></div>
      <Ribbon />
      <FormulaBar />
      <main className="flex min-h-0 flex-1">
        <div className="relative min-w-0 flex-1 overflow-hidden">
          <Sheet />
          <div className="pointer-events-none absolute left-[275px] top-[152px] h-[180px] w-[83px] border-[3px] border-black" />
          <div className="absolute left-[353px] top-[329px] size-[6px] border-l border-t border-white bg-black" />
          <button type="button" aria-label="オートフィル オプション" className="absolute left-[358px] top-[331px] flex size-[25px] items-center justify-center border border-[#e6c24c] bg-[#f1f1f1]">
            <svg width="19" height="18" viewBox="0 0 19 18">
              <path d="M.5.5h16v5H.5zM.5 5.500h8v5h-8z" fill="#fff" stroke="#1c2f5e" />
              <path d="M0 0h9v6H0z" fill="#1c2f5e" />
              <path d="M0 13.500h10M0 15.500h9" stroke="#222" strokeDasharray="1 2" />
              <path d="M11 13.500h7M14.500 10v7" stroke="#111" />
            </svg>
          </button>
          <div className="absolute left-[524px] top-[145px]"><Chart /></div>
        </div>
        <VScroll />
      </main>
      <SheetTabs />
      <StatusBar />
      <Taskbar />
    </div>
  );
}
